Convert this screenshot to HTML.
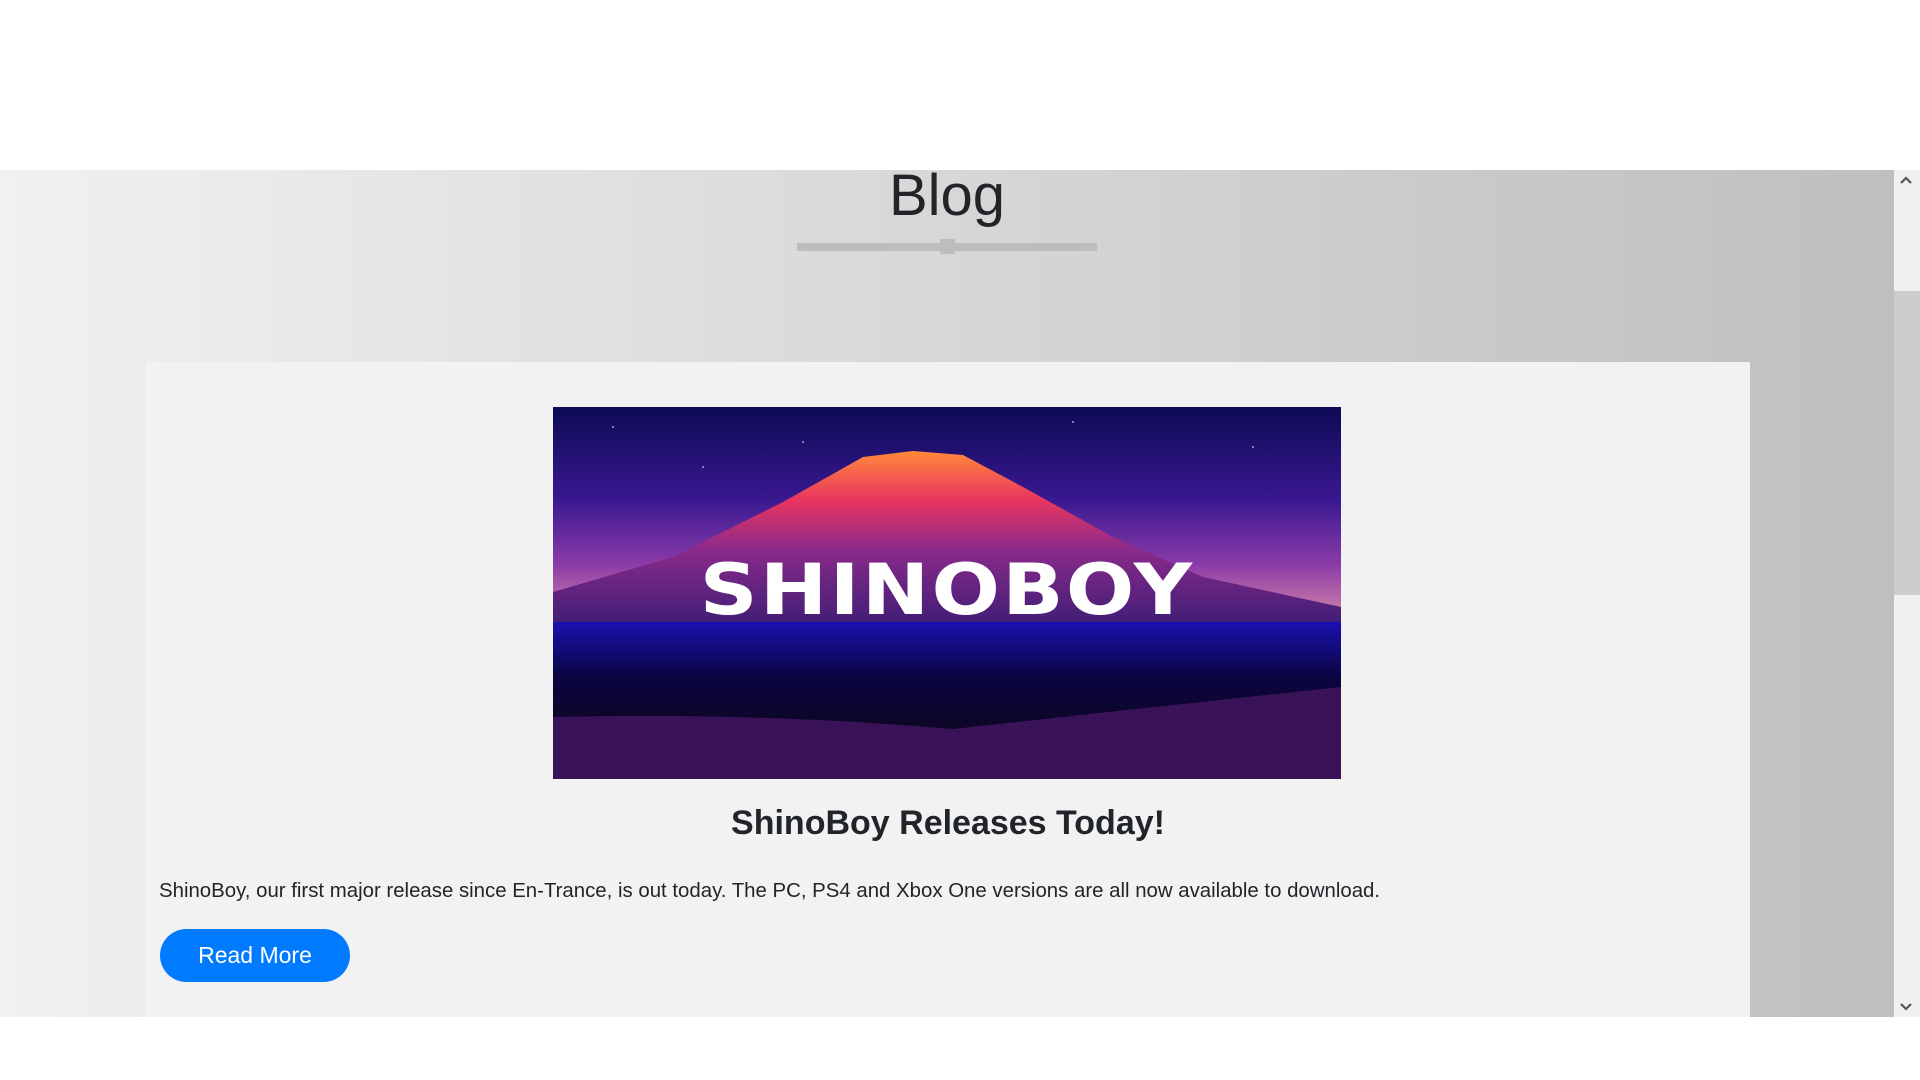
<!DOCTYPE html>
<html><head><meta charset="utf-8"><style>
*{margin:0;padding:0;box-sizing:border-box}
html,body{width:1920px;height:1080px;overflow:hidden;background:#fff;font-family:"Liberation Sans",sans-serif;color:#212529}
.sec{position:absolute;left:0;top:170px;width:1894px;height:847px;background:linear-gradient(90deg,#f1f1f1 0%,#dcdcdc 40%,#c8c8c8 80%,#bfbfbf 100%)}
.sb{position:absolute;left:1894px;top:170px;width:26px;height:847px;background:#f0f0f0}
.thumb{position:absolute;left:1894px;top:291px;width:26px;height:304px;background:#cdcdcd}
h1{position:absolute;left:0;width:1894px;top:160px;text-align:center;font-weight:400;font-size:58px;line-height:72px;color:#212529}
.line{position:absolute;left:797px;top:243px;width:300px;height:8px;background:#bdbdbd}
.nub{position:absolute;left:940px;top:239px;width:15px;height:15px;background:#bdbdbd}
.card{position:absolute;left:146px;top:362px;width:1604px;height:655px;background:#f2f2f2}
.img{position:absolute;left:553px;top:407px;width:788px;height:372px}
h2{position:absolute;left:146px;width:1604px;top:800px;text-align:center;font-size:34px;font-weight:700;line-height:46px}
p{position:absolute;left:159px;top:878px;font-size:20.4px;line-height:26px;white-space:nowrap}
.btn{position:absolute;left:160px;top:929px;width:190px;height:53px;border-radius:27px;background:#007bff;color:#fff;font-size:23px;line-height:53px;text-align:center}
</style></head><body>
<div class="sec"></div>
<div class="sb"></div><div class="thumb"></div>
<svg style="position:absolute;left:1896px;top:172px" width="20" height="16"><path d="M5 11 L10 6 L15 11" stroke="#555" stroke-width="2.2" fill="none"/></svg>
<svg style="position:absolute;left:1896px;top:999px" width="20" height="16"><path d="M5 5 L10 10 L15 5" stroke="#555" stroke-width="2.2" fill="none"/></svg>
<h1>Blog</h1>
<div class="line"></div><div class="nub"></div>
<div class="card"></div>
<svg class="img" viewBox="0 0 788 372">
<defs>
<linearGradient id="sky" x1="0" y1="0" x2="0" y2="1"><stop offset="0" stop-color="#0c0a55"/><stop offset="0.25" stop-color="#3a1890"/><stop offset="0.42" stop-color="#8a3aa8"/><stop offset="0.55" stop-color="#c87aa8"/></linearGradient>
<linearGradient id="mt" x1="0" y1="0" x2="0" y2="1"><stop offset="0" stop-color="#ff8a3a"/><stop offset="0.25" stop-color="#ea3560"/><stop offset="0.5" stop-color="#8a2a8a"/><stop offset="1" stop-color="#2a1a70"/></linearGradient>
<linearGradient id="gr" x1="0" y1="0" x2="0" y2="1"><stop offset="0" stop-color="#1a10b0"/><stop offset="0.35" stop-color="#0a0540"/><stop offset="0.7" stop-color="#0e0624"/><stop offset="1" stop-color="#3a1258"/></linearGradient>
</defs>
<rect width="788" height="372" fill="url(#sky)"/>
<g fill="#fff" opacity="0.6"><circle cx="60" cy="20" r="1"/><circle cx="250" cy="35" r="1"/><circle cx="520" cy="15" r="1"/><circle cx="700" cy="40" r="1"/><circle cx="150" cy="60" r="1"/></g>
<path d="M0 185 L120 150 L230 95 L310 50 L360 44 L410 48 L470 80 L560 130 L650 170 L788 200 L788 240 L0 240Z" fill="url(#mt)"/>
<rect y="215" width="788" height="157" fill="url(#gr)"/>
<path d="M0 310 Q200 305 400 322 Q600 300 788 280 L788 372 L0 372Z" fill="#3a1258"/>
<text x="394" y="207" text-anchor="middle" font-family="DejaVu Sans" font-weight="700" font-size="70" fill="#fff" letter-spacing="2" transform="translate(394 0) scale(1.15 1) translate(-394 0)">SHINOBOY</text>
</svg>
<h2>ShinoBoy Releases Today!</h2>
<p>ShinoBoy, our first major release since En-Trance, is out today. The PC, PS4 and Xbox One versions are all now available to download.</p>
<div class="btn">Read More</div>
</body></html>
